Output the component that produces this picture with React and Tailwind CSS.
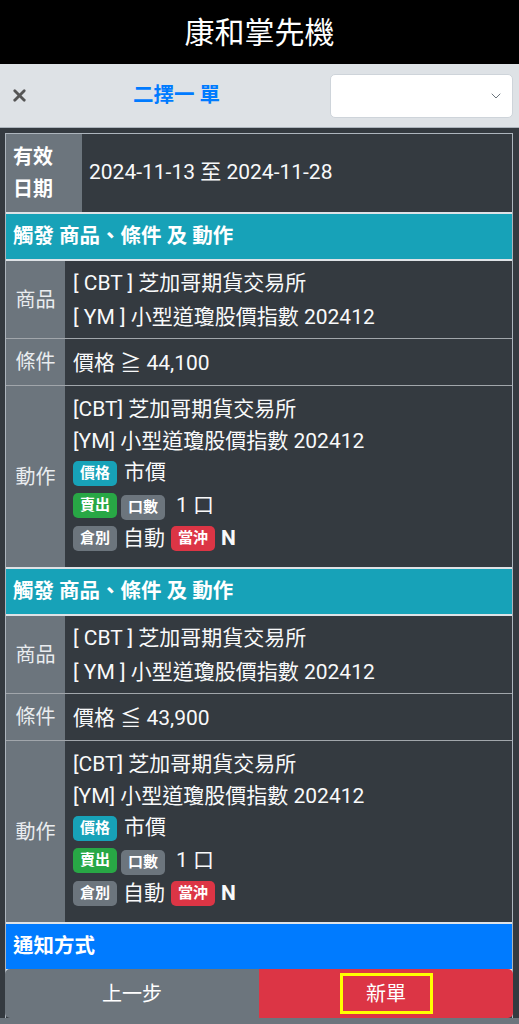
import { X, ChevronDown } from "lucide-react";

const font = { fontFamily: 'Roboto, "Noto Sans CJK TC", sans-serif' };

function Badge({ color, children }) {
  return (
    <span
      className={`inline-flex items-center h-[25px] px-[7px] rounded-[5px] text-[15px] font-bold text-white leading-none ${color}`}
    >
      {children}
    </span>
  );
}

function SectionHeader({ color, children }) {
  return (
    <div className="border-t-2 border-b-2 border-[#dee2e6]">
      <div className={`h-[45px] flex items-center pl-[7px] text-[20.5px] font-bold text-white ${color}`}>
        {children}
      </div>
    </div>
  );
}

function Row({ label, h, children, last }) {
  return (
    <div className={`flex ${last ? "" : "border-b border-[#a1a6ab]"}`} style={{ height: h }}>
      <div className="w-[59px] shrink-0 bg-[#6c757d] flex items-center justify-center text-[20px] text-[#e9ecef]">
        {label}
      </div>
      <div className="flex-1 flex flex-col justify-center pl-[8px] text-[21px] text-[#f8f9fa]">
        {children}
      </div>
    </div>
  );
}

function TriggerBlock({ cond }) {
  return (
    <>
      <SectionHeader color="bg-[#17a2b8]">觸發 商品、條件 及 動作</SectionHeader>
      <Row label="商品" h={78}>
        <div className="leading-[34px]">[ CBT ] 芝加哥期貨交易所</div>
        <div className="leading-[34px]">[ YM ] 小型道瓊股價指數 202412</div>
      </Row>
      <Row label="條件" h={47}>
        <div className="leading-[34px] pt-[2px]">{cond}</div>
      </Row>
      <Row label="動作" h={181} last>
        <div className="pt-[7px] pb-[12px]">
          <div className="leading-[32px]">[CBT] 芝加哥期貨交易所</div>
          <div className="leading-[32px]">[YM] 小型道瓊股價指數 202412</div>
          <div className="h-[32px] flex items-center gap-[7px]">
            <Badge color="bg-[#17a2b8]">價格</Badge>
            <span>市價</span>
          </div>
          <div className="h-[33px] flex items-center">
            <Badge color="bg-[#28a745]">賣出</Badge>
            <span className="ml-[4px]">
              <Badge color="bg-[#6c757d]">口數</Badge>
            </span>
            <span className="ml-[11px]">1 口</span>
          </div>
          <div className="h-[33px] flex items-center gap-[6px]">
            <Badge color="bg-[#6c757d]">倉別</Badge>
            <span>自動</span>
            <Badge color="bg-[#dc3545]">當沖</Badge>
            <span className="font-bold">N</span>
          </div>
        </div>
      </Row>
    </>
  );
}

export default function App() {
  return (
    <div className="min-h-screen bg-[#343a40]" style={font}>
      {/* top title */}
      <div className="h-16 bg-black flex items-center justify-center text-[30px] text-white">
        康和掌先機
      </div>

      {/* nav bar */}
      <div className="h-16 bg-[#dee2e6] border-b border-[#adb5bd] flex items-center">
        <div className="w-[133px] shrink-0 pl-[10px]">
          <X size={19} strokeWidth={3.5} className="text-[#555]" />
        </div>
        <div className="text-[20.5px] font-bold text-[#007bff]">二擇一 單</div>
        <div className="flex-1" />
        <div className="w-[183px] h-[44px] mr-[6px] bg-white border border-[#ced4da] rounded-[5px] flex items-center justify-end pr-[8px]">
          <ChevronDown size={16} strokeWidth={1.5} className="text-[#6c757d]" />
        </div>
      </div>

      {/* content */}
      <div className="pt-[5px] pl-[5px] pr-[6px] pb-[120px]">
        <div className="border border-[#adb5bd] border-b-0">
          <div className="flex h-[78px]">
            <div className="w-[76px] shrink-0 bg-[#6c757d] flex flex-col justify-center pl-[7px] text-[20px] font-bold text-white leading-[32px]">
              <span>有效</span>
              <span>日期</span>
            </div>
            <div className="flex-1 flex items-center pl-[7px] text-[21px] text-[#f8f9fa]">
              2024-11-13 至 2024-11-28
            </div>
          </div>
          <TriggerBlock cond="價格 ≧ 44,100" />
          <TriggerBlock cond="價格 ≦ 43,900" />
          <SectionHeader color="bg-[#007bff]">通知方式</SectionHeader>
          <div className="h-[80px]" />
        </div>
      </div>

      {/* footer buttons */}
      <div className="fixed bottom-0 left-0 right-0">
        <div className="pl-[5px] pr-[6px]">
          <div className="h-[49px] flex rounded-[5px] overflow-hidden text-[20px] text-white">
            <button className="flex-1 bg-[#6c757d] flex items-center justify-center">上一步</button>
            <button className="flex-1 bg-[#dc3545] flex items-center justify-center">
              <span className="w-[93px] h-[41px] border-[3px] border-[#ffff00] flex items-center justify-center">
                新單
              </span>
            </button>
          </div>
        </div>
        <div className="h-[6px] bg-[#6c757d]" />
      </div>
    </div>
  );
}
